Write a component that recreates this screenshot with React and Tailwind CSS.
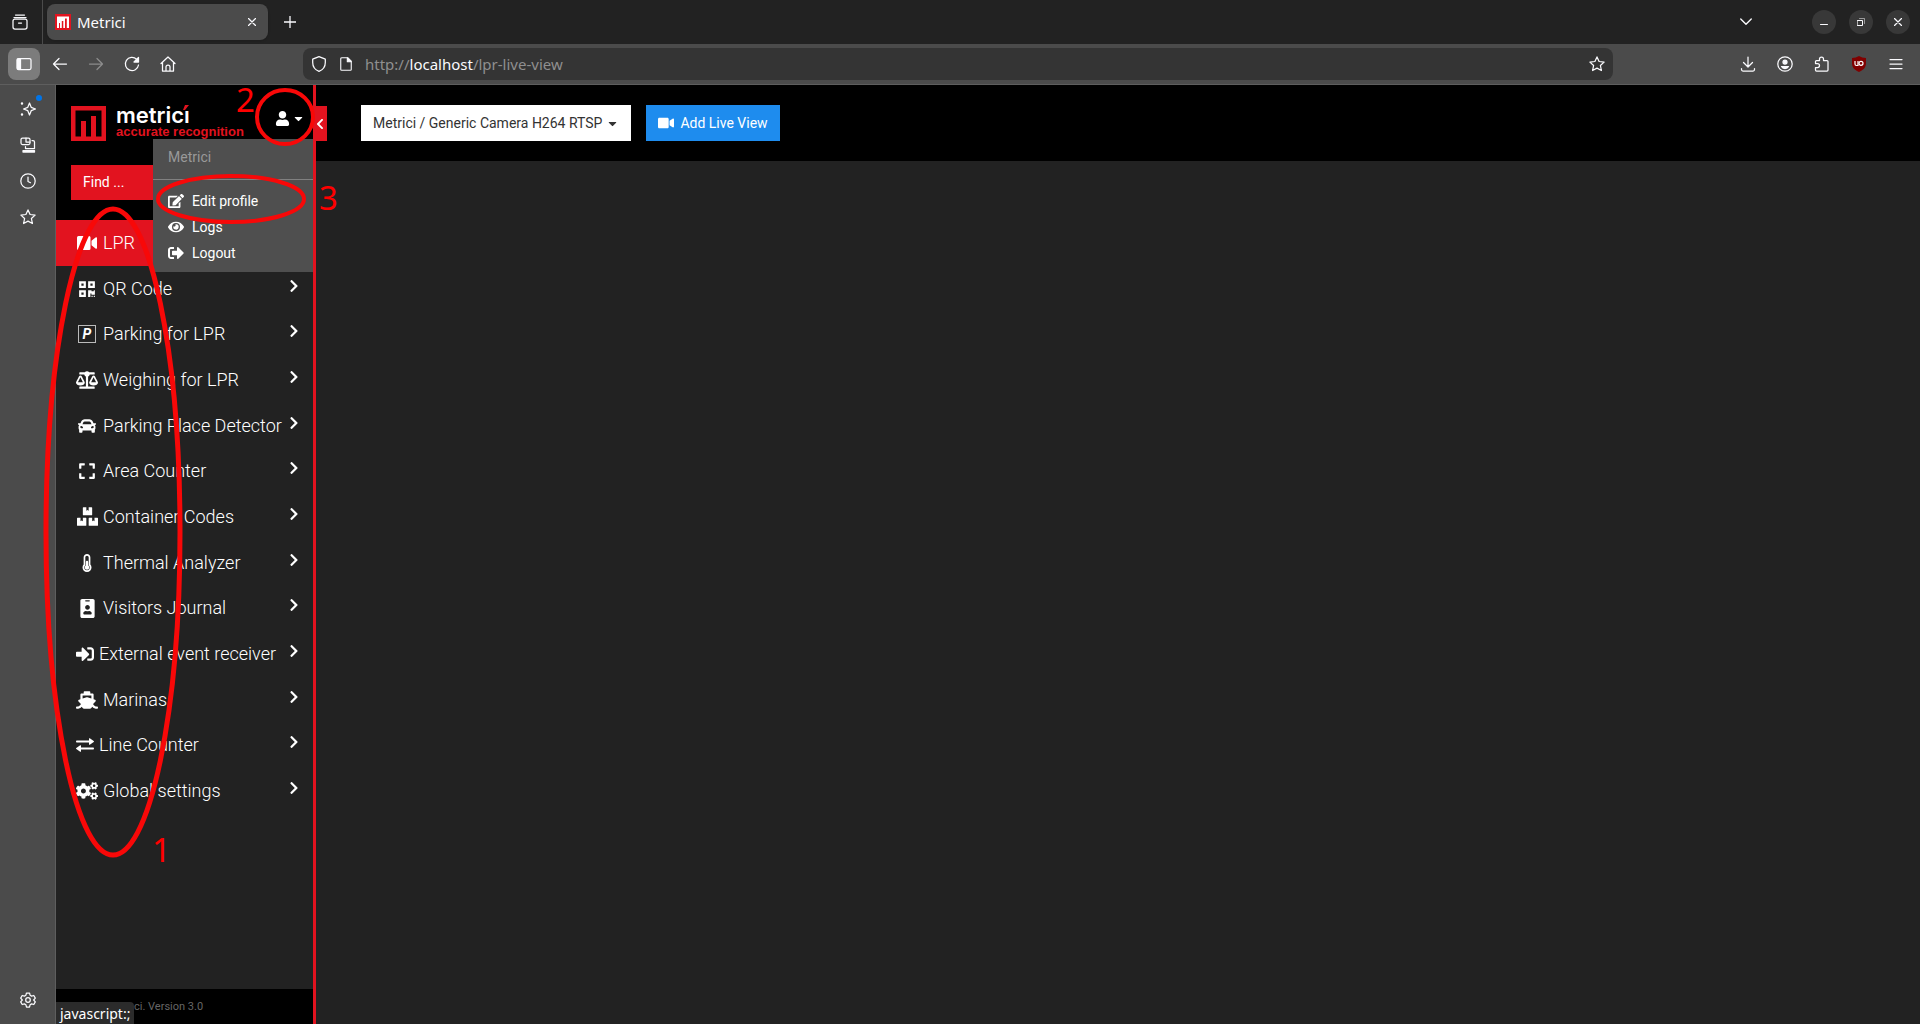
import React from "react";
import {
  FaQrcode, FaBalanceScale, FaCar, FaExpand, FaBoxes, FaThermometerHalf, FaIdBadge, FaSignInAlt, FaShip,
  FaCogs, FaChevronRight, FaChevronLeft, FaUser, FaEdit, FaEye, FaSignOutAlt, FaVideo, FaCaretDown,
} from "react-icons/fa";

// Thin outline icon on a 16px grid, used for all the browser chrome
function Line({ children, className = "", size = 16, width = 1.25 }) {
  return (
    <svg
      width={size}
      height={size}
      viewBox="0 0 16 16"
      fill="none"
      stroke="currentColor"
      strokeWidth={width}
      strokeLinecap="round"
      strokeLinejoin="round"
      className={className}
      aria-hidden="true"
    >
      {children}
    </svg>
  );
}

const STAR = "M8 .9l2.100 4.600 5 .6-3.700 3.400 1 5L8 12.100l-4.400 2.400 1-5L.9 6.100l5-.6z";

function Star() {
  return <Line><path d={STAR} /></Line>;
}

function Favicon() {
  return (
    <svg width="16" height="16" viewBox="0 0 16 16" aria-hidden="true">
      <path fill="#e2131f" d="M0 0h16v16H0z" />
      <path fill="#fff" d="M2 2.500h12V14h-2.200V4.500H10V14H8.300V7H6.800v7H5V9H4v5H2z" />
    </svg>
  );
}

function LogoMark() {
  return (
    <svg width="35" height="35" viewBox="0 0 35 35" fill="#e2131f" aria-hidden="true">
      <path fillRule="evenodd" d="M0 0h35v35H0zM4.500 4.500v26h26v-26z" />
      <path d="M10 15h5v16h-5zM20 10h5v21h-5z" />
    </svg>
  );
}

function SlashedCamera() {
  return (
    <svg width="20" height="14" viewBox="0 0 20 14" fill="#fff" aria-hidden="true">
      <path d="M1.500 0H8L2 14H1.500Q0 14 0 12.500v-11Q0 0 1.500 0zM9 0h3Q13.500 0 13.500 1.500v11Q13.500 14 12 14H3zM14.500 4.800L18.500 1.500Q20 .8 20 2v10q0 1.200-1.500.5l-4-3.300z" />
    </svg>
  );
}

function ParkingSign() {
  return (
    <span className="flex h-[18px] w-[18px] items-center justify-center border border-[#bbb] text-sm leading-none font-bold italic">
      P
    </span>
  );
}

function Exchange() {
  return (
    <svg width="18" height="14" viewBox="0 0 18 14" fill="#fff" aria-hidden="true">
      <path d="M.8 2.500H13V.8q0-1 .8-.5l3.900 2.700q.6.500 0 1l-3.900 2.700q-.8.500-.8-.5V4.500H.8Q0 4.500 0 3.500t.8-1zM17.200 9.500H5V7.800q0-1-.8-.5L.3 10q-.6.500 0 1l3.900 2.700q.8.500.8-.5v-1.700h12.200q.8 0 .8-1t-.8-1z" />
    </svg>
  );
}

const MENU = [
  { label: "LPR", icon: <SlashedCamera />, active: true },
  { label: "QR Code", icon: <FaQrcode size={18} /> },
  { label: "Parking for LPR", icon: <ParkingSign /> },
  { label: "Weighing for LPR", icon: <FaBalanceScale size={22} /> },
  { label: "Parking Place Detector", icon: <FaCar size={18} /> },
  { label: "Area Counter", icon: <FaExpand size={18} /> },
  { label: "Container Codes", icon: <FaBoxes size={21} /> },
  { label: "Thermal Analyzer", icon: <FaThermometerHalf size={18} /> },
  { label: "Visitors Journal", icon: <FaIdBadge size={19} /> },
  { label: "External event receiver", icon: <FaSignInAlt size={18} />, narrow: true },
  { label: "Marinas", icon: <FaShip size={22} /> },
  { label: "Line Counter", icon: <Exchange />, narrow: true },
  { label: "Global settings", icon: <FaCogs size={22} /> },
];

function TabBar() {
  return (
    <div className="flex h-11 items-center bg-[#222]">
      <button aria-label="Recent browsing" className="flex w-[42px] justify-center pr-0.5">
        <Line>
          <path d="M3.500 1h9M2 3.500h12" />
          <rect x="1" y="5" width="14" height="10" rx="2" />
          <path d="M6.500 9h3" />
        </Line>
      </button>
      <div className="h-full w-px bg-[#4b4b4b]" />
      <div className="ml-1 flex h-9 w-[221px] items-center gap-1.5 rounded-lg bg-[#4b4b4b] px-2 shadow">
        <Favicon />
        <span className="flex-1 text-[15px]">Metrici</span>
        <button aria-label="Close tab" className="px-1">
          <Line size={8} width={2.500}><path d="M1 1l14 14M15 1L1 15" /></Line>
        </button>
      </div>
      <button aria-label="New tab" className="ml-4">
        <Line size={12} width={1.700}><path d="M8 0v16M0 8h16" /></Line>
      </button>
      <button aria-label="List all tabs" className="mr-15 ml-auto">
        <Line size={12} width={1.800}><path d="M1 4l7 7 7-7" /></Line>
      </button>
      <div className="flex gap-[13px] pr-2.5">
        <button aria-label="Minimize" className="flex h-6 w-6 items-center justify-center rounded-full bg-[#383838]">
          <Line size={8} width={2}><path d="M1 13h14" /></Line>
        </button>
        <button aria-label="Restore" className="flex h-6 w-6 items-center justify-center rounded-full bg-[#383838]">
          <Line size={8} width={2}><path d="M1 5h10v10H1z" /><path opacity=".5" d="M5 1h10v10" /></Line>
        </button>
        <button aria-label="Close window" className="flex h-6 w-6 items-center justify-center rounded-full bg-[#383838]">
          <Line size={8} width={2.500}><path d="M1 1l14 14M15 1L1 15" /></Line>
        </button>
      </div>
    </div>
  );
}

function Toolbar() {
  return (
    <div className="flex h-[41px] items-center border-b border-[#5e5e5e] bg-[#4b4b4b] pr-4 pl-2">
      <div className="flex items-center">
        <button aria-label="Sidebar" className="flex h-8 w-8 items-center justify-center rounded-lg bg-[#7c7c7c]">
          <Line>
            <rect x="1" y="2.500" width="14" height="11" rx="1.500" />
            <path fill="currentColor" d="M1.500 3h3v10h-3z" />
          </Line>
        </button>
        <button aria-label="Back" className="ml-3"><Line><path d="M1.500 8h13M7 2.500L1.500 8 7 13.500" /></Line></button>
        <button aria-label="Forward" className="ml-5 text-[#8c8c8c]"><Line><path d="M1.500 8h13M9 2.500L14.500 8 9 13.500" /></Line></button>
        <button aria-label="Reload" className="ml-5">
          <Line><path d="M14.500 9A6.600 6.600 0 1 1 12.600 3.300" /><path fill="currentColor" d="M14.500 1.500v4.500H10z" /></Line>
        </button>
        <button aria-label="Home" className="ml-5">
          <Line><path d="M1 7.500L8 1l7 6.500M2.500 6.500V15h11V6.500M6 15v-4q0-2 2-2t2 2v4" /></Line>
        </button>
      </div>
      <div className="ml-[127px] flex h-8 min-w-0 flex-1 items-center rounded-lg bg-[#343434] px-2">
        <Line><path d="M8 .7l6.300 2.500v3.300C14.300 11 11.500 14 8 15.300 4.500 14 1.700 11 1.700 6.500V3.200z" /></Line>
        <Line size={14} className="ml-3 shrink-0"><path d="M3.500.8H10l4 4v9.400q0 1-1 1H3q-1 0-1-1V1.800q0-1 1.500-1z" /><path fill="currentColor" d="M9.500 1v4.500H14z" /></Line>
        <p className="ml-3 flex-1 text-[15px] text-[#8f8f8f]">
          http://<span className="text-[#fbfbfe]">localhost</span>/lpr-live-view
        </p>
        <button aria-label="Bookmark"><Star /></button>
      </div>
      <div className="ml-[127px] flex items-center gap-[21px]">
        <button aria-label="Downloads"><Line><path d="M8 1v9.500M3.500 6.500L8 11l4.500-4.500M1.500 12.500v1q0 1.500 1.500 1.500h10q1.500 0 1.500-1.500v-1" /></Line></button>
        <button aria-label="Account">
          <Line><circle cx="8" cy="8" r="7.200" /><circle cx="8" cy="6" r="2" fill="currentColor" /><path fill="currentColor" d="M4.500 10.500h7Q10.500 12.500 8 12.500t-3.500-2z" /></Line>
        </button>
        <button aria-label="Extensions">
          <Line><path d="M1.500 7.500V5.500q0-1 1-1h3V3a2 2 0 0 1 4 0v1.500h3.500q1 0 1 1V14q0 1-1 1H2.500q-1 0-1-1v-2.500H3.500a2 2 0 0 0 0-4z" /></Line>
        </button>
        <button aria-label="uBlock Origin">
          <svg width="16" height="16" viewBox="0 0 16 16" aria-hidden="true">
            <path fill="#800000" d="M8 0q3 1.800 7 2v5c0 5-3 7-7 9-4-2-7-4-7-9V2q4-.2 7-2z" />
            <path fill="none" stroke="#fff" strokeWidth="1.200" d="M4 5v3q0 1.500 1.500 1.500H7V5" />
            <circle cx="10" cy="7.300" r="2" fill="none" stroke="#fff" strokeWidth="1.200" />
          </svg>
        </button>
        <button aria-label="Menu"><Line><path d="M2 3.500h12M2 8h12M2 12.500h12" /></Line></button>
      </div>
    </div>
  );
}

function BrowserRail() {
  return (
    <div className="flex w-14 shrink-0 flex-col items-center gap-5 border-r border-[#5e5e5e] bg-[#4b4b4b] py-4">
      <button aria-label="AI chatbot" className="relative">
        <Line>
          <path d="M9.500 2l1.700 4.300 4.300 1.700-4.300 1.700L9.500 14 7.800 9.700 3.500 8l4.300-1.700z" />
          <circle cx="2" cy="2.500" r=".6" fill="currentColor" />
          <circle cx="2" cy="13.500" r=".6" fill="currentColor" />
        </Line>
        <span className="absolute -top-1.5 -right-1.5 h-1.5 w-1.5 rounded-full bg-[#0074e8]" />
      </button>
      <button aria-label="Synced tabs">
        <Line>
          <rect x="1" y="1" width="9" height="6.500" rx="1.500" />
          <path d="M6 1v4h4M12 3.500h1q1.500 0 1.500 1.500v6.500H5.500v-2" />
          <path fill="currentColor" d="M3 13.500h11.500v1.500H3z" />
        </Line>
      </button>
      <button aria-label="History"><Line><circle cx="8" cy="8" r="7.200" /><path d="M8 4v4.500l2.500 1.200" /></Line></button>
      <button aria-label="Bookmarks"><Star /></button>
      <button aria-label="Customize sidebar" className="mt-auto">
        <Line><path d="M6.500 1h3l.6 2.200 1.500.9 2.200-.6 1.500 2.600L13.700 8l1.600 1.900-1.500 2.600-2.200-.6-1.500.9L9.500 15h-3l-.6-2.200-1.500-.9-2.200.6L.7 9.900 2.300 8 .7 6.100l1.500-2.600 2.200.6 1.500-.9z" /><circle cx="8" cy="8" r="2.300" /></Line>
      </button>
    </div>
  );
}

function ProfileMenu() {
  return (
    <div className="absolute top-[54px] right-0 z-10 w-40 bg-[#4f4f4f] pb-1.5 text-sm text-white">
      <p className="h-[41px] border-b border-[#808080] px-[15px] pt-2 text-[#999]">Metrici</p>
      <ul className="pt-2">
        <li><a href="#profile" className="flex h-[26px] items-center gap-2 px-[15px]"><FaEdit size={16} />Edit profile</a></li>
        <li><a href="#logs" className="flex h-[26px] items-center gap-2 px-[15px]"><FaEye size={16} />Logs</a></li>
        <li><a href="#logout" className="flex h-[26px] items-center gap-2 px-[15px]"><FaSignOutAlt size={16} />Logout</a></li>
      </ul>
    </div>
  );
}

function Sidebar() {
  return (
    <aside className="relative flex w-[260px] shrink-0 flex-col border-r-3 border-[#e2131f] bg-[#222] text-white">
      <header className="h-[135px] bg-black pt-[21px] pl-[15px]">
        <div className="flex">
          <LogoMark />
          <div className="ml-2.5 h-[35px]">
            <p className="relative font-[Inter] text-[22px] leading-[18px] font-semibold">
              metricı
              <svg width="6" height="5" viewBox="0 0 6 5" className="absolute -top-px left-[67px]" aria-hidden="true">
                <path fill="#e2131f" d="M2 0h4L2 5H0z" />
              </svg>
            </p>
            <p className="mt-0.5 font-['Liberation_Sans'] text-[13px] leading-3 font-bold whitespace-nowrap text-[#e2131f]">accurate recognition</p>
          </div>
          <button aria-label="User menu" className="ml-auto flex h-6 items-center gap-0.5 pr-2">
            <FaUser size={15} />
            <FaCaretDown size={13} />
          </button>
        </div>
        <input aria-label="Find" placeholder="Find ..." className="mt-6 block h-[35px] w-[227px] bg-[#e2131f] px-3 pb-0.5 text-sm placeholder:text-white" />
      </header>
      <ProfileMenu />
      <nav>
        <ul className="grid h-[594px] auto-rows-fr">
          {MENU.map((item) => (
            <li key={item.label} className={item.active ? "bg-[#e2131f]" : ""}>
              <a href="#menu" className="flex h-full items-center pr-3 pl-5 text-lg font-light">
                <span className={`flex shrink-0 justify-center ${item.narrow ? "w-[18px]" : "w-[22px]"}`}>{item.icon}</span>
                <span className="ml-[5px] flex-1 whitespace-nowrap">{item.label}</span>
                <FaChevronRight size={14} className="mb-1.5 shrink-0" />
              </a>
            </li>
          ))}
        </ul>
      </nav>
      <footer className="mt-auto h-[35px] bg-black pl-[78px] text-[11px] leading-9 text-[#666]">ci. Version 3.0</footer>
      <button aria-label="Collapse menu" className="absolute top-[21px] -right-3.5 flex h-[35px] w-3.5 items-center justify-center bg-[#e2131f]">
        <FaChevronLeft size={12} />
      </button>
      <div className="absolute bottom-0 left-0 h-[22px] rounded-tr bg-[#2b2b2b] px-1 font-['Noto_Sans'] text-sm leading-6">javascript:;</div>
    </aside>
  );
}

// Red pen marks laid over the window
function Annotations() {
  return (
    <div className="pointer-events-none absolute inset-0 z-20 font-['Noto_Sans'] text-[33px] leading-8 text-[#f00]">
      <svg width="400" height="900" fill="none" stroke="#f80808" className="absolute top-0 left-0" aria-hidden="true">
        <ellipse cx="113" cy="532" rx="67" ry="323" strokeWidth="5" />
        <ellipse cx="285" cy="117" rx="28" ry="27" strokeWidth="4" />
        <ellipse cx="231" cy="199" rx="73" ry="23" strokeWidth="4" />
      </svg>
      <span className="absolute top-[834px] left-[152px]">1</span>
      <span className="absolute top-[84px] left-[236px]">2</span>
      <span className="absolute top-[182px] left-[319px]">3</span>
    </div>
  );
}

export default function App() {
  return (
    <div className="relative flex min-h-screen flex-col bg-[#222] font-['Noto_Sans',sans-serif] text-[#fbfbfe]">
      <TabBar />
      <Toolbar />
      <div className="flex flex-1">
        <BrowserRail />
        <div className="flex min-w-0 flex-1 font-[Roboto,sans-serif]">
          <Sidebar />
          <main className="min-w-0 flex-1">
            <div className="flex h-[76px] items-center gap-[15px] bg-black pl-[45px]">
              <button className="flex h-9 items-center gap-1 bg-white px-3 text-sm text-[#333]">
                Metrici / Generic Camera H264 RTSP
                <FaCaretDown size={13} />
              </button>
              <button className="flex h-9 items-center gap-1.5 bg-[#1e8cee] px-3 text-sm text-white">
                <FaVideo size={16} />
                Add Live View
              </button>
            </div>
          </main>
        </div>
      </div>
      <Annotations />
    </div>
  );
}
